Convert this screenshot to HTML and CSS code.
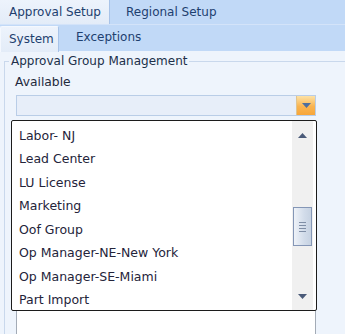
FILE: index.html
```html
<!DOCTYPE html>
<html lang="en">
<head>
  <meta charset="UTF-8" />
  <title>Approval Setup</title>
  <link rel="stylesheet" href="styles.css">
</head>
<body>
  <div class="tabstrip main-tabs">
    <div class="tab active">Approval Setup</div>
    <div class="tab">Regional Setup</div>
  </div>
  <div class="tabstrip sub-tabs">
    <div class="tab active">System</div>
    <div class="tab">Exceptions</div>
  </div>

  <div class="panel">
    <fieldset class="group">
      <legend>Approval Group Management</legend>
      <div class="group-body">
        <div class="field-label">Available</div>
        <div class="combo">
          <div class="combo-text"></div>
          <div class="combo-btn">
            <svg width="9" height="5" viewBox="0 0 9 5"><path d="M0 0h9L4.5 5z" fill="#4d6e9e"/></svg>
          </div>
        </div>
        <div class="listbox"></div>
      </div>
    </fieldset>
  </div>

  <!-- dropdown list opened over the listbox -->
  <div class="popup">
    <ul class="items">
      <li>Labor- NJ</li>
      <li>Lead Center</li>
      <li>LU License</li>
      <li>Marketing</li>
      <li>Oof Group</li>
      <li>Op Manager-NE-New York</li>
      <li>Op Manager-SE-Miami</li>
      <li>Part Import</li>
    </ul>
    <div class="scrollbar">
      <div class="sb-btn">
        <svg width="9" height="5" viewBox="0 0 9 5"><path d="M0 5h9L4.5 0z" fill="#4a5a78"/></svg>
      </div>
      <div class="sb-track">
        <div class="sb-thumb">
          <span></span><span></span><span></span><span></span>
        </div>
      </div>
      <div class="sb-btn">
        <svg width="9" height="5" viewBox="0 0 9 5"><path d="M0 0h9L4.5 5z" fill="#4a5a78"/></svg>
      </div>
    </div>
  </div>
</body>
</html>
```

FILE: styles.css
```css
body {
  margin: 0;
  height: 334px;
  overflow: hidden;
  background: #eef4fc;
  font-family: "DejaVu Sans", Verdana, sans-serif;
  font-size: 12px;
  color: #1f2a3c;
}

.tabstrip {
  display: flex;
  background: #c1d9f7;
  color: #1e3f6f;
}

.main-tabs {
  height: 24px;
}

.sub-tabs {
  height: 27px;
  border-top: 1px solid #d3e3f9;
  box-sizing: border-box;
}

.tab {
  padding: 0 15px 0 16px;
  line-height: 24px;
}

.tab.active {
  background: linear-gradient(#edf3fc, #e3ecf8);
  border-right: 1px solid #a8c3e8;
  padding: 0 8px 0 9px;
}

.main-tabs .tab.active {
  width: 92px;
}

.sub-tabs .tab.active {
  margin-top: 1px;
  height: 25px;
  width: 41px;
  border-top: 1px solid #f4f8fe;
  border-left: 1px solid #f4f8fe;
  padding-left: 8px;
  border-radius: 2px 2px 0 0;
}

.sub-tabs .tab {
  line-height: 25px;
}

.sub-tabs .tab:nth-child(2) {
  padding-left: 17px;
}

.panel {
  padding-top: 3px;
}

.group {
  margin: 0 0 0 4px;
  padding: 0;
  border: none;
  border-top: 1px solid #c9d8ec;
  border-left: 1px solid #c9d8ec;
}

.group legend {
  margin-left: 4px;
  padding: 0 2px;
  line-height: 14px;
  color: #20304a;
}

.group-body {
  padding: 7px 0 0 11px;
}

.field-label {
  margin-left: -1px;
  line-height: 15px;
  font-size: 12.3px;
}

.combo {
  display: flex;
  margin-top: 5px;
  width: 300px;
  height: 21px;
  box-sizing: border-box;
  border: 1px solid #b9cde7;
  background: #e7eef9;
}

.combo-text {
  flex: 1;
}

.combo-btn {
  width: 18px;
  display: flex;
  align-items: center;
  justify-content: center;
  background: linear-gradient(#fde2a6, #f9b451 55%, #f7a63a);
  border-left: 1px solid #e0c48f;
}

.listbox {
  margin-top: 4px;
  width: 300px;
  height: 214px;
  box-sizing: border-box;
  border: 1px solid #a3abb6;
  border-bottom: none;
  background: #fff;
}

.popup {
  position: absolute;
  left: 11px;
  top: 120px;
  width: 306px;
  height: 191px;
  box-sizing: border-box;
  border: 1px solid #1c1c1c;
  border-radius: 2px;
  background: #fff;
  display: flex;
  overflow: hidden;
}

.items {
  flex: 1;
  list-style: none;
  margin: 0;
  padding: 2.5px 0 0 7px;
  font-size: 12.5px;
  color: #24243a;
}

.items li {
  height: 23.5px;
  line-height: 23.5px;
  white-space: nowrap;
}

.scrollbar {
  width: 21px;
  margin-right: 3px;
  background: #f0f0f0;
  display: flex;
  flex-direction: column;
}

.sb-btn {
  height: 28px;
  display: flex;
  align-items: center;
  justify-content: center;
}

.sb-track {
  flex: 1;
}

.sb-thumb {
  margin: 58px 0 0 1px;
  width: 19px;
  height: 39px;
  box-sizing: border-box;
  border: 1px solid #8496b6;
  background: linear-gradient(90deg, #eef2f8, #d2dcea 60%, #c6d2e2);
  display: flex;
  flex-direction: column;
  align-items: center;
  justify-content: center;
  gap: 2px;
}

.sb-thumb span {
  width: 7px;
  height: 1px;
  background: #7f8ea6;
}
```
